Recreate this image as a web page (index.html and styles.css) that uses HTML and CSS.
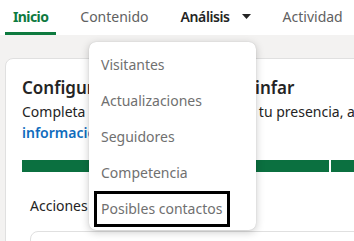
FILE: index.html
```html
<!DOCTYPE html>
<html lang="es">
<head>
    <meta charset="UTF-8">
    <meta name="viewport" content="width=device-width, initial-scale=1.0">
    <title>Inicio</title>
    <link rel="stylesheet" href="styles.css">
</head>
<body>

<nav class="tabs">
    <div class="tab active">Inicio</div>
    <div class="tab">Contenido</div>
    <div class="tab tab-open">
        Análisis
        <svg class="caret" width="9" height="5" viewBox="0 0 9 5"><path d="M0 0h9L4.5 5z" fill="#242424"/></svg>
        <ul class="menu">
            <li class="menu-item">Visitantes</li>
            <li class="menu-item">Actualizaciones</li>
            <li class="menu-item">Seguidores</li>
            <li class="menu-item">Competencia</li>
            <li class="menu-item focused">Posibles contactos</li>
        </ul>
    </div>
    <div class="tab">Actividad</div>
</nav>

<main class="page">
    <section class="card">
        <h2 class="card-title">Configura tu página de Confinfar</h2>
        <p class="card-text">Completa estos pasos para mejorar tu presencia, aumentar tu alcance y compartir más</p>
        <a class="card-link" href="#">información</a>

        <div class="progress">
            <span class="segment wide"></span>
            <span class="segment"></span>
        </div>

        <div class="subtabs">
            <span class="subtab">Acciones</span>
        </div>
        <div class="task"></div>
    </section>
</main>

</body>
</html>
```

FILE: styles.css
```css
body {
    margin: 0;
    font-family: "Noto Sans", "Open Sans", sans-serif;
    font-size: 14px;
    color: #242424;
    background: #f3f2f1;
    overflow: hidden;
}

.tabs {
    position: relative;
    display: flex;
    gap: 16px;
    height: 35px;
    padding-left: 5px;
    background: #fff;
}

.tab {
    display: flex;
    align-items: center;
    gap: 12px;
    padding: 1px 8px 0;
    color: #616161;
    border-bottom: 3px solid transparent;
}

.tab.active {
    color: #0e7a3f;
    font-weight: 700;
    letter-spacing: -0.6px;
    border-bottom-color: #0e7a3f;
}

.tab-open {
    color: #242424;
    font-weight: 600;
    letter-spacing: -0.4px;
}

.menu {
    position: absolute;
    top: 42px;
    left: 89px;
    width: 167px;
    margin: 0;
    padding: 5px 0 3px;
    list-style: none;
    background: #fff;
    border-radius: 7px;
    box-shadow: 0 2px 8px rgba(0, 0, 0, 0.22), 0 0 1px rgba(0, 0, 0, 0.2);
    font-weight: 400;
    letter-spacing: 0;
    z-index: 2;
}

.menu-item {
    width: fit-content;
    height: 36px;
    line-height: 36px;
    margin-left: 5px;
    padding: 0 7px;
    color: #707070;
    white-space: nowrap;
}

.menu-item.focused {
    outline: 3px solid #000;
    outline-offset: -3px;
    padding-right: 8px;
}

.page {
    padding: 23px 0 0 5px;
}

.card {
    width: 380px;
    height: 300px;
    padding: 16px;
    box-sizing: border-box;
    background: #fff;
    border: 1px solid #e0e0e0;
    border-radius: 8px;
}

.card-title {
    margin: -1px 0 0;
    font-size: 17px;
    font-weight: 600;
    line-height: 28px;
    white-space: nowrap;
}

.card-text {
    margin: 0;
    line-height: 20px;
    white-space: nowrap;
}

.card-link {
    display: block;
    line-height: 21px;
    color: #0f6cbd;
    font-weight: 600;
    text-decoration: none;
}

.progress {
    display: flex;
    gap: 2px;
    margin-top: 17px;
}

.segment {
    height: 12px;
    width: 40px;
    background: #0b7040;
}

.segment.wide {
    width: 328px;
}

.subtabs {
    margin-top: 24px;
    padding-left: 8px;
    line-height: 20px;
}

.task {
    height: 60px;
    margin: 15px 0 0 8px;
    border: 1px solid #e0e0e0;
    border-radius: 8px;
}
```
